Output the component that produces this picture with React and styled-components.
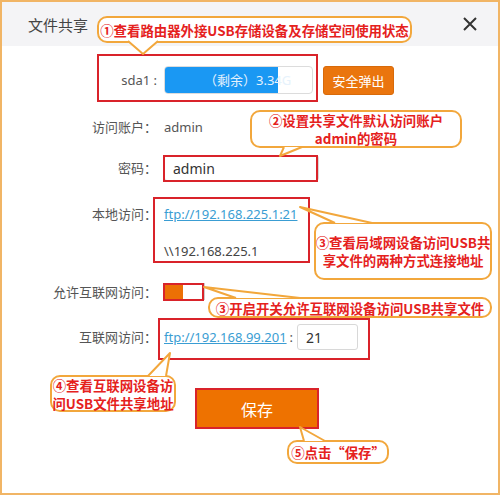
import React from 'react'
import styled, { createGlobalStyle } from 'styled-components'

const GlobalStyle = createGlobalStyle`
  html, body {
    margin: 0;
    padding: 0;
    background: #fff;
  }
  body {
    font-family: "Noto Sans", "Noto Sans CJK SC", sans-serif;
  }
`

const ORANGE_LINE = '#f2a73c'
const RED_MARK = '#d9232a'

const Frame = styled.div`
  position: relative;
  width: 500px;
  height: 495px;
  box-sizing: border-box;
  border: 2px solid #f1b565;
  background: #fff;
  overflow: hidden;
`

const Header = styled.div`
  height: 44px;
  background: #f4f4f6;
  display: flex;
  align-items: center;
  justify-content: space-between;
  padding: 0 21px 0 26px;
  h1{
    margin: 0;
    font-size: 15px;
    font-weight: 400;
    color: #444;
    font-family: "Noto Sans CJK SC", sans-serif;
  }
`

const Form = styled.div`
  padding-top: 20px;
`

const Row = styled.div`
  display: flex;
  align-items: ${p => p.$top ? 'flex-start' : 'center'};
  margin-top: ${p => p.$mt || 0}px;
  height: ${p => p.$h ? `${p.$h}px` : 'auto'};
`

const Label = styled.div`
  width: 155px;
  flex-shrink: 0;
  text-align: right;
  font-size: 13px;
  line-height: 20px;
  color: #555;
  font-family: "Noto Sans", "Noto Sans CJK SC", sans-serif;
`

const Field = styled.div`
  margin-left: 7px;
  display: flex;
  align-items: center;
  font-size: 13px;
  color: #555;
`

const Stack = styled.div`
  margin-left: 7px;
  display: flex;
  flex-direction: column;
  gap: 17px;
  font-size: 13px;
  line-height: 20px;
  color: #444;
`

const Bar = styled.div`
  position: relative;
  width: 149px;
  height: 28px;
  box-sizing: border-box;
  border: 1px solid #dcdcdc;
  border-radius: 4px;
  overflow: hidden;
  background: #fff;
  .fill{
    height: 100%;
    background: #1a98f3;
  }
  span{
    position: absolute;
    left: 39px;
    top: 0;
    line-height: 26px;
    font-size: 13px;
    color: #e6f2fc;
    white-space: nowrap;
  }
`

const EjectButton = styled.button`
  margin-left: 10px;
  width: 71px;
  height: 29px;
  border: 1px solid #d86a0a;
  border-radius: 3px;
  background: #ea750e;
  color: #fff;
  font-size: 13px;
  font-family: "Noto Sans CJK SC", sans-serif;
  padding: 0;
`

const TextInput = styled.div`
  width: ${p => p.$w}px;
  height: 26px;
  box-sizing: border-box;
  border: 1px solid #d8d8d8;
  border-radius: 3px;
  padding-left: ${p => p.$pl || 8}px;
  display: flex;
  align-items: center;
  font-size: 14px;
  color: #333;
`

const Link = styled.a`
  color: #3a9dd3;
  text-decoration: underline;
  font-size: 13px;
  line-height: 20px;
`

const Switch = styled.div`
  width: 41px;
  height: 17px;
  box-sizing: border-box;
  border: 1px solid #ccc;
  background: #fff;
  display: flex;
  .knob{
    width: 18px;
    height: 100%;
    background: #ec7005;
  }
`

const SaveButton = styled.button`
  margin: 38px 0 0 193px;
  width: 124px;
  height: 41px;
  border: none;
  background: #ee7200;
  color: #fff;
  font-size: 16px;
  font-family: "Noto Sans CJK SC", sans-serif;
  padding: 0;
`

const Overlay = styled.div`
  position: absolute;
  left: -2px;
  top: -2px;
  width: 500px;
  height: 495px;
  pointer-events: none;
`

const Mark = styled.div`
  position: absolute;
  left: ${p => p.$x}px;
  top: ${p => p.$y}px;
  width: ${p => p.$w}px;
  height: ${p => p.$h}px;
  box-sizing: border-box;
  border: 2px solid ${RED_MARK};
`

const Callout = styled.div`
  position: absolute;
  left: ${p => p.$x}px;
  top: ${p => p.$y}px;
  width: ${p => p.$w}px;
  height: ${p => p.$h}px;
  box-sizing: border-box;
  border: 2px solid ${ORANGE_LINE};
  border-radius: 10px;
  background: #fff;
  display: flex;
  align-items: center;
  justify-content: center;
  text-align: center;
  color: #e5211d;
  font-weight: 700;
  font-size: 13.4px;
  line-height: 18px;
  white-space: nowrap;
  font-family: "Noto Sans CJK SC", sans-serif;
`

const Tails = styled.svg`
  position: absolute;
  left: 0;
  top: 0;
`

const tails = [
  { a: [128, 41], b: [158, 41], tip: [143, 54] },
  { a: [284, 147], b: [302, 147], tip: [280, 156] },
  { a: [335, 223], b: [372, 223], tip: [300, 207] },
  { a: [236, 298], b: [300, 298], tip: [204, 287] },
  { a: [148, 376], b: [166, 376], tip: [170, 353] },
  { a: [304, 441], b: [325, 441], tip: [300, 427] },
]

const CloseIcon = () => (
  <svg width="14" height="14" viewBox="0 0 14 14">
    <path d="M1 1 L13 13 M13 1 L1 13" stroke="#333" strokeWidth="2" />
  </svg>
)

const App = () => {
  return (
    <>
      <GlobalStyle />
      <Frame>
        <Header>
          <h1>文件共享</h1>
          <CloseIcon />
        </Header>
        <Form>
          <Row $h={28}>
            <Label>sda1 :</Label>
            <Field>
              <Bar>
                <div className="fill" style={{ width: '77%' }} />
                <span>（剩余）3.34G</span>
              </Bar>
              <EjectButton>安全弹出</EjectButton>
            </Field>
          </Row>
          <Row $mt={23} $h={20}>
            <Label>访问账户：</Label>
            <Field>admin</Field>
          </Row>
          <Row $mt={18} $h={26}>
            <Label>密码：</Label>
            <Field>
              <TextInput $w={155}>admin</TextInput>
            </Field>
          </Row>
          <Row $mt={23} $top>
            <Label>本地访问：</Label>
            <Stack>
              <Link href="#">ftp://192.168.225.1:21</Link>
              <div>\\192.168.225.1</div>
            </Stack>
          </Row>
          <Row $mt={22} $h={17}>
            <Label>允许互联网访问：</Label>
            <Field>
              <Switch><div className="knob" /></Switch>
            </Field>
          </Row>
          <Row $mt={24} $h={26}>
            <Label>互联网访问：</Label>
            <Field>
              <Link href="#">ftp://192.168.99.201</Link>
              <span style={{ margin: '0 4px 0 3px' }}>:</span>
              <TextInput $w={61}>21</TextInput>
            </Field>
          </Row>
          <SaveButton>保存</SaveButton>
        </Form>

        <Overlay>
          <Mark $x={97} $y={54} $w={221} $h={48} />
          <Mark $x={163} $y={155} $w={155} $h={27} />
          <Mark $x={153} $y={197} $w={157} $h={66} />
          <Mark $x={163} $y={283} $w={41} $h={18} />
          <Mark $x={158} $y={318} $w={212} $h={42} />
          <Mark $x={195} $y={388} $w={124} $h={41} />

          <Callout $x={97} $y={16} $w={315} $h={27}>①查看路由器外接USB存储设备及存储空间使用状态</Callout>
          <Callout $x={250} $y={110} $w={212} $h={38}>②设置共享文件默认访问账户<br />admin的密码</Callout>
          <Callout $x={314} $y={222} $w={178} $h={58}>③查看局域网设备访问USB共<br />享文件的两种方式连接地址</Callout>
          <Callout $x={208} $y={297} $w={284} $h={21}>③开启开关允许互联网设备访问USB共享文件</Callout>
          <Callout $x={50} $y={375} $w={126} $h={37}>④查看互联网设备访<br />问USB文件共享地址</Callout>
          <Callout $x={287} $y={440} $w={102} $h={24}>⑤点击“保存”</Callout>

          <Tails width="500" height="495" viewBox="0 0 500 495">
            {tails.map((t, i) => (
              <g key={i}>
                <polygon
                  points={`${t.a[0]},${t.a[1]} ${t.tip[0]},${t.tip[1]} ${t.b[0]},${t.b[1]}`}
                  fill="#fff"
                />
                <polyline
                  points={`${t.a[0]},${t.a[1]} ${t.tip[0]},${t.tip[1]} ${t.b[0]},${t.b[1]}`}
                  fill="none"
                  stroke={ORANGE_LINE}
                  strokeWidth="2"
                  strokeLinejoin="round"
                />
              </g>
            ))}
          </Tails>
        </Overlay>
      </Frame>
    </>
  )
}

export default App
